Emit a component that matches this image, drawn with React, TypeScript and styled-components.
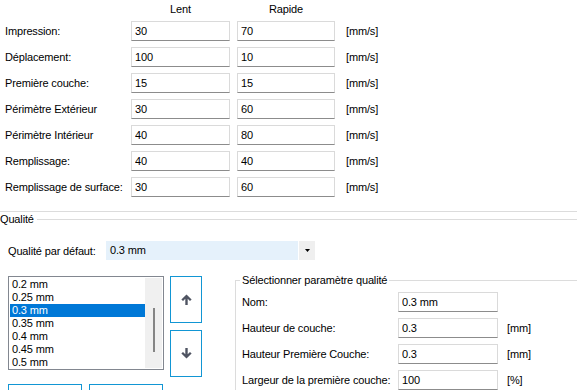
import React from "react";
import styled, { createGlobalStyle } from "styled-components";

const GlobalStyle = createGlobalStyle`
  body {
    margin: 0;
    background: #ffffff;
    color: #000000;
    font-family: "Liberation Sans", Arial, sans-serif;
    font-size: 11px;
    letter-spacing: -0.15px;
  }
`;

const Page = styled.div`
  width: 577px;
  height: 390px;
  overflow: hidden;
  background: #ffffff;
`;

const SpeedGrid = styled.div`
  display: grid;
  grid-template-columns: 119px 99px 98px auto;
  grid-template-rows: 15px;
  grid-auto-rows: 20px;
  column-gap: 7px;
  row-gap: 6px;
  padding-left: 5px;
  align-items: center;
`;

const ColHead = styled.div`
  align-self: stretch;
  padding-top: 3px;
  line-height: 12px;
  text-align: center;
`;

const Label = styled.div`
  line-height: 20px;
  white-space: nowrap;
`;

const Unit = styled.div<{ $offset?: number }>`
  line-height: 20px;
  padding-left: ${(p) => p.$offset ?? 4}px;
  white-space: nowrap;
`;

const Field = styled.input`
  box-sizing: border-box;
  width: 100%;
  height: 20px;
  margin: 0;
  padding: 0 3px;
  border: 1px solid #dadada;
  border-bottom-color: #8c8c8c;
  background: #ffffff;
  font-family: inherit;
  font-size: 11px;
  letter-spacing: -0.15px;
  color: #000000;
  outline: none;
`;

const Divider = styled.div`
  height: 1px;
  margin-top: 14px;
  background: #dcdcdc;
`;

const GroupHead = styled.div`
  display: flex;
  align-items: center;
  gap: 3px;
  height: 15px;
  line-height: 15px;
`;

const HeadLine = styled.div`
  flex: 1;
  height: 1px;
  background: #dcdcdc;
`;

const DefaultRow = styled.div`
  display: flex;
  align-items: center;
  height: 19px;
  margin-top: 14px;
  padding-left: 8px;
`;

const DefaultLabel = styled.div`
  width: 98px;
  white-space: nowrap;
`;

const Combo = styled.div`
  display: flex;
  width: 209px;
  height: 19px;
`;

const ComboValue = styled.div`
  flex: 1;
  margin-right: 1px;
  padding-left: 4px;
  line-height: 19px;
  background: #e5f1fb;
`;

const ComboButton = styled.div`
  display: flex;
  align-items: center;
  justify-content: center;
  width: 16px;
  background: #efefef;
`;

const Lower = styled.div`
  display: flex;
  align-items: flex-start;
  margin-top: 13px;
  padding-left: 8px;
`;

const ListCol = styled.div`
  display: flex;
  flex-direction: column;
  gap: 14px;
  margin-top: 3px;
`;

const ListBox = styled.div`
  box-sizing: border-box;
  display: flex;
  width: 156px;
  height: 94px;
  padding: 1px;
  border: 1px solid #828790;
  overflow: hidden;
`;

const Items = styled.div`
  width: 135px;
`;

const Item = styled.div<{ $selected?: boolean }>`
  height: 13px;
  padding-left: 2px;
  line-height: 13px;
  white-space: nowrap;
  background: ${(p) => (p.$selected ? "#0078d7" : "transparent")};
  color: ${(p) => (p.$selected ? "#ffffff" : "#000000")};
`;

const ScrollTrack = styled.div`
  display: flex;
  flex-direction: column;
  align-items: center;
  width: 17px;
  padding-top: 30px;
  background: #f0f0f0;
`;

const ScrollThumb = styled.div`
  width: 2px;
  height: 44px;
  background: #858585;
`;

const ButtonRow = styled.div`
  display: flex;
  gap: 7px;
`;

const ActionButton = styled.div`
  box-sizing: border-box;
  width: 74px;
  height: 24px;
  border: 1px solid #1296d4;
  background: #ffffff;
`;

const ArrowCol = styled.div`
  display: flex;
  flex-direction: column;
  gap: 7px;
  margin-top: 3px;
  margin-left: 6px;
`;

const ArrowButton = styled.div`
  box-sizing: border-box;
  display: flex;
  align-items: center;
  justify-content: center;
  width: 32px;
  height: 47px;
  border: 1px solid #1296d4;
  background: #ffffff;
`;

const ParamGroup = styled.fieldset`
  flex: 1;
  min-width: 0;
  margin: 0 -10px 0 33px;
  padding: 5px 0 0 6px;
  border: 1px solid #dcdcdc;
`;

const ParamLegend = styled.legend`
  margin-left: -2px;
  padding: 0 2px;
  line-height: 14px;
  font-size: 11px;
`;

const ParamGrid = styled.div`
  display: grid;
  grid-template-columns: 156px 100px auto;
  grid-auto-rows: 20px;
  row-gap: 6px;
  align-items: center;
`;

const speeds = [
  { label: "Impression:", slow: "30", fast: "70" },
  { label: "Déplacement:", slow: "100", fast: "10" },
  { label: "Première couche:", slow: "15", fast: "15" },
  { label: "Périmètre Extérieur", slow: "30", fast: "60" },
  { label: "Périmètre Intérieur", slow: "40", fast: "80" },
  { label: "Remplissage:", slow: "40", fast: "40" },
  { label: "Remplissage de surface:", slow: "30", fast: "60" },
];

const qualities = ["0.2 mm", "0.25 mm", "0.3 mm", "0.35 mm", "0.4 mm", "0.45 mm", "0.5 mm"];

const params = [
  { label: "Nom:", value: "0.3 mm", unit: "" },
  { label: "Hauteur de couche:", value: "0.3", unit: "[mm]" },
  { label: "Hauteur Première Couche:", value: "0.3", unit: "[mm]" },
  { label: "Largeur de la première couche:", value: "100", unit: "[%]" },
];

function Arrow({ up }: { up?: boolean }) {
  return (
    <svg width="11" height="11" viewBox="0 0 12 12" style={{ transform: up ? undefined : "rotate(180deg)" }}>
      <path d="M6 0.5 L11.6 6 L9.8 7.6 L7.3 5.1 V12 H4.7 V5.1 L2.2 7.6 L0.4 6 Z" fill="#4f5462" />
    </svg>
  );
}

export default function App() {
  return (
    <Page>
      <GlobalStyle />
      <SpeedGrid>
        <div />
        <ColHead>Lent</ColHead>
        <ColHead>Rapide</ColHead>
        <div />
        {speeds.map((s) => (
          <React.Fragment key={s.label}>
            <Label>{s.label}</Label>
            <Field defaultValue={s.slow} />
            <Field defaultValue={s.fast} />
            <Unit>[mm/s]</Unit>
          </React.Fragment>
        ))}
      </SpeedGrid>

      <Divider />
      <GroupHead>
        <span>Qualité</span>
        <HeadLine />
      </GroupHead>

      <DefaultRow>
        <DefaultLabel>Qualité par défaut:</DefaultLabel>
        <Combo>
          <ComboValue>0.3 mm</ComboValue>
          <ComboButton>
            <svg width="5" height="3" viewBox="0 0 5 3">
              <path d="M0 0 H5 L2.5 3 Z" fill="#000000" />
            </svg>
          </ComboButton>
        </Combo>
      </DefaultRow>

      <Lower>
        <ListCol>
          <ListBox>
            <Items>
              {qualities.map((q) => (
                <Item key={q} $selected={q === "0.3 mm"}>
                  {q}
                </Item>
              ))}
            </Items>
            <ScrollTrack>
              <ScrollThumb />
            </ScrollTrack>
          </ListBox>
          <ButtonRow>
            <ActionButton />
            <ActionButton />
          </ButtonRow>
        </ListCol>

        <ArrowCol>
          <ArrowButton>
            <Arrow up />
          </ArrowButton>
          <ArrowButton>
            <Arrow />
          </ArrowButton>
        </ArrowCol>

        <ParamGroup>
          <ParamLegend>Sélectionner paramètre qualité</ParamLegend>
          <ParamGrid>
            {params.map((p) => (
              <React.Fragment key={p.label}>
                <Label>{p.label}</Label>
                <Field defaultValue={p.value} />
                <Unit $offset={9}>{p.unit}</Unit>
              </React.Fragment>
            ))}
          </ParamGrid>
        </ParamGroup>
      </Lower>
    </Page>
  );
}
